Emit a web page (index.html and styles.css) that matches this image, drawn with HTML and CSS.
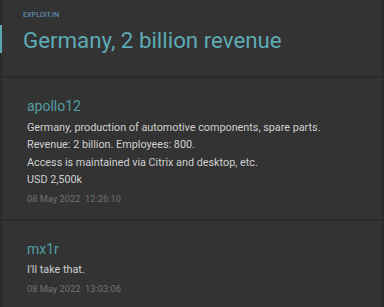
FILE: index.html
```html
<!DOCTYPE html>
<html lang="en">
<head>
    <meta charset="UTF-8">
    <meta name="viewport" content="width=device-width, initial-scale=1.0">
    <title>Germany, 2 billion revenue</title>
    <link rel="stylesheet" href="styles.css">
</head>
<body>
    <div class="page">
        <header class="thread-head">
            <div class="forum">EXPLOIT.IN</div>
            <h1 class="title">Germany, 2 billion revenue</h1>
        </header>

        <div class="post">
            <div class="author">apollo12</div>
            <div class="message">
                <p>Germany, production of automotive components, spare parts.</p>
                <p>Revenue: 2 billion. Employees: 800.</p>
                <p>Access is maintained via Citrix and desktop, etc.</p>
                <p>USD 2,500k</p>
            </div>
            <div class="time">08 May 2022&nbsp; 12:26:10</div>
        </div>

        <div class="post">
            <div class="author">mx1r</div>
            <div class="message">
                <p>I'll take that.</p>
            </div>
            <div class="time">08 May 2022&nbsp; 13:03:06</div>
        </div>
    </div>
</body>
</html>
```

FILE: styles.css
```css
html, body {
    margin: 0;
    height: 100%;
}

body {
    background-color: #333333;
    font-family: Roboto, "Liberation Sans", sans-serif;
    overflow: hidden;
}

.page {
    height: 100%;
    border-left: 2px solid #2a2a2a;
    border-right: 2px solid #2a2a2a;
}

/* Thread header */
.thread-head {
    position: relative;
    height: 78px;
    padding: 10px 0 0 21px;
    box-sizing: border-box;
    border-bottom: 2px solid #2b2b2b;
}

/* teal marker next to the title */
.thread-head::before {
    content: "";
    position: absolute;
    left: -2px;
    top: 25px;
    width: 2px;
    height: 28px;
    background-color: #5ba7b0;
}

.forum {
    font-size: 7.2px;
    color: #6a9fc4;
    line-height: 10px;
}

.title {
    margin: 4px 0 0;
    font-size: 22.3px;
    font-weight: normal;
    color: #5eaab5;
    line-height: 32px;
}

/* Posts */
.post {
    padding: 18px 0 13px 25px;
    border-bottom: 2px solid #2b2b2b;
}

.author {
    font-size: 14px;
    color: #529ea3;
    line-height: 20px;
    margin-bottom: 2.5px;
}

.message p {
    margin: 0;
    font-size: 10.8px;
    line-height: 17.6px;
    color: #d0d0d0;
}

.time {
    margin-top: 3px;
    font-size: 9.3px;
    line-height: 14px;
    color: #727272;
}
```
